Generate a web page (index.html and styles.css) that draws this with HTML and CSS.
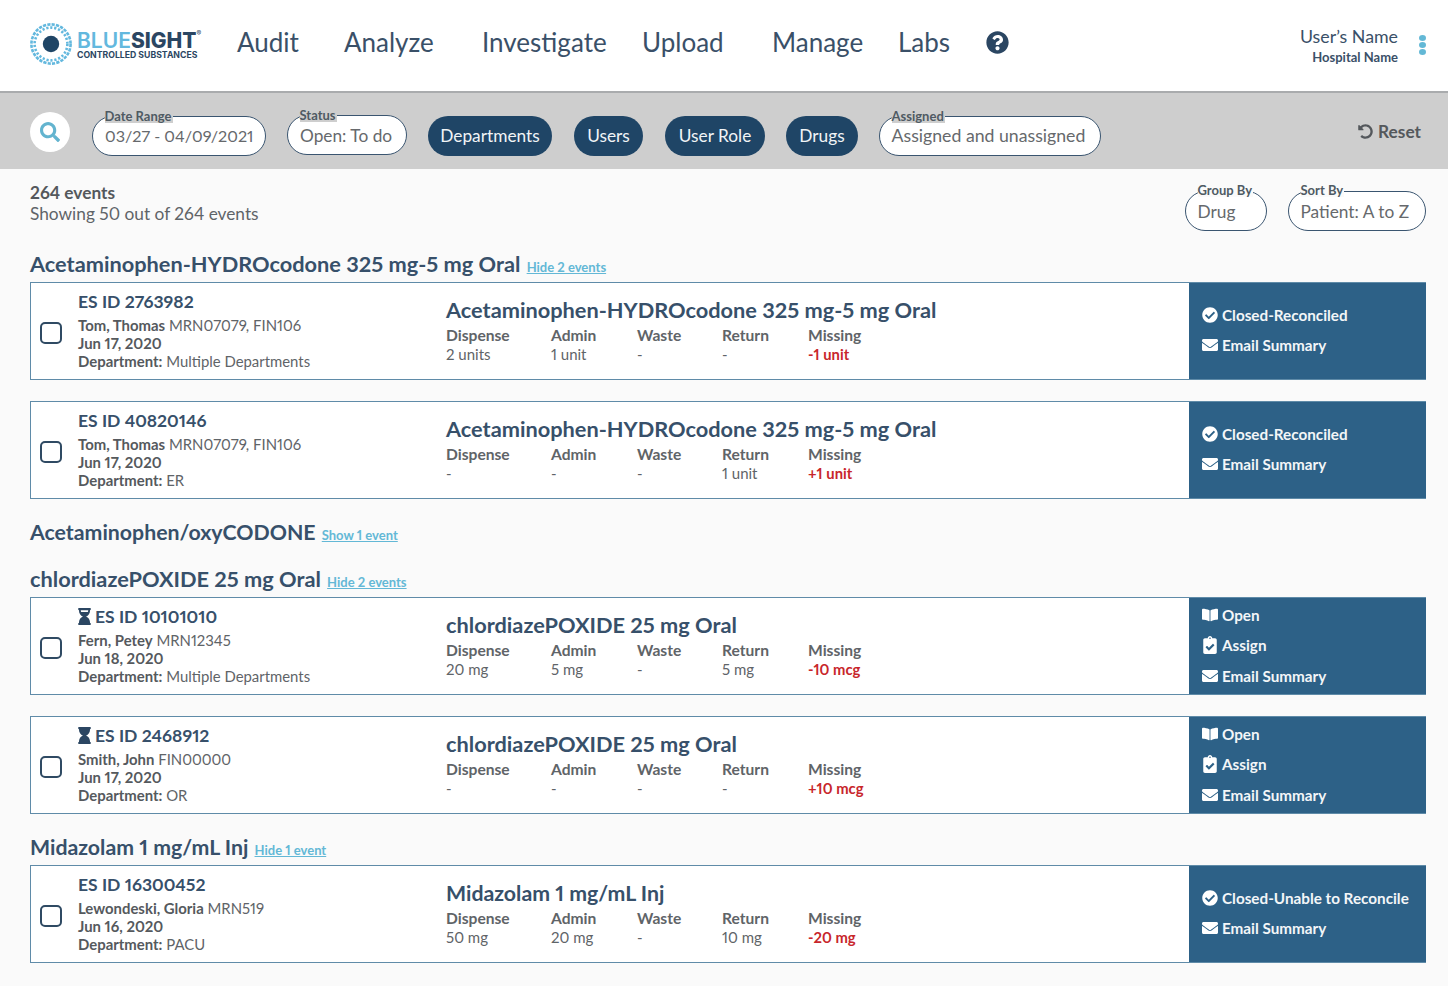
FILE: index.html
```html
<!DOCTYPE html>
<html lang="en">
<head>
<meta charset="utf-8">
<title>Bluesight Controlled Substances</title>
<link rel="stylesheet" href="styles.css">
</head>
<body>
<svg class="defs" width="0" height="0" aria-hidden="true">
  <symbol id="i-check" viewBox="0 0 512 512"><path d="M504 256c0 136.967-111.033 248-248 248S8 392.967 8 256 119.033 8 256 8s248 111.033 248 248zM227.314 387.314l184-184c6.248-6.248 6.248-16.379 0-22.627l-22.627-22.627c-6.248-6.249-16.379-6.249-22.628 0L216 308.118l-70.059-70.059c-6.248-6.248-16.379-6.248-22.628 0l-22.627 22.627c-6.248 6.248-6.248 16.379 0 22.627l104 104c6.249 6.249 16.379 6.249 22.628.001z"/></symbol>
  <symbol id="i-mail" viewBox="0 0 512 512"><path d="M502.3 190.8c3.9-3.1 9.7-.2 9.7 4.7V400c0 26.5-21.5 48-48 48H48c-26.5 0-48-21.5-48-48V195.6c0-5 5.7-7.8 9.7-4.7 22.4 17.4 52.1 39.5 154.1 113.6 21.1 15.4 56.7 47.8 92.2 47.6 35.7.3 72-32.8 92.3-47.6 102-74.1 131.6-96.3 154-113.7zM256 320c23.2.4 56.6-29.2 73.4-41.4 132.7-96.3 142.8-104.7 173.4-128.7 5.8-4.5 9.2-11.5 9.2-18.9v-19c0-26.5-21.5-48-48-48H48C21.5 64 0 85.5 0 112v19c0 7.4 3.4 14.3 9.2 18.9 30.6 23.9 40.7 32.4 173.4 128.7 16.8 12.2 50.2 41.8 73.4 41.4z"/></symbol>
  <symbol id="i-book" viewBox="0 0 576 512"><path d="M542.22 32.05c-54.8 3.11-163.72 14.43-230.96 55.59-4.64 2.84-7.27 7.89-7.27 13.17v363.87c0 11.55 12.63 18.85 23.28 13.49 69.18-34.82 169.23-44.32 218.7-46.92 16.89-.89 30.02-14.43 30.02-30.66V62.75c.01-17.71-15.35-31.74-33.77-30.7zM264.73 87.64C197.5 46.48 88.58 35.17 33.78 32.05 15.36 31.01 0 45.04 0 62.75V400.6c0 16.24 13.13 29.78 30.02 30.66 49.49 2.6 149.59 12.11 218.77 46.95 10.62 5.35 23.21-1.94 23.21-13.46V100.63c0-5.29-2.62-10.14-7.27-12.99z"/></symbol>
  <symbol id="i-clip" viewBox="0 0 384 512"><path d="M336 64h-80c0-35.3-28.7-64-64-64s-64 28.7-64 64H48C21.5 64 0 85.5 0 112v352c0 26.5 21.5 48 48 48h288c26.5 0 48-21.5 48-48V112c0-26.5-21.5-48-48-48zM192 40c13.3 0 24 10.7 24 24s-10.7 24-24 24-24-10.7-24-24 10.7-24 24-24zm121.2 231.8l-143 141.8c-4.7 4.7-12.3 4.6-17-.1l-82.6-83.3c-4.7-4.7-4.6-12.3.1-17L99.1 285c4.7-4.7 12.3-4.6 17 .1l46 46.4 106-105.2c4.7-4.7 12.3-4.6 17 .1l28.2 28.4c4.7 4.8 4.6 12.3-.1 17z"/></symbol>
  <symbol id="i-hour" viewBox="0 0 384 512"><path d="M360 0H24C10.745 0 0 10.745 0 24v16c0 13.255 10.745 24 24 24 0 90.965 51.016 167.734 120.842 192C75.016 280.266 24 357.035 24 448c-13.255 0-24 10.745-24 24v16c0 13.255 10.745 24 24 24h336c13.255 0 24-10.745 24-24v-16c0-13.255-10.745-24-24-24 0-90.965-51.016-167.734-120.842-192C308.984 231.734 360 154.965 360 64c13.255 0 24-10.745 24-24V24c0-13.255-10.745-24-24-24z"/></symbol>
  <symbol id="i-hour-half" viewBox="0 0 384 512"><path fill-rule="evenodd" d="M360 0H24C10.745 0 0 10.745 0 24v16c0 13.255 10.745 24 24 24 0 90.965 51.016 167.734 120.842 192C75.016 280.266 24 357.035 24 448c-13.255 0-24 10.745-24 24v16c0 13.255 10.745 24 24 24h336c13.255 0 24-10.745 24-24v-16c0-13.255-10.745-24-24-24 0-90.965-51.016-167.734-120.842-192C308.984 231.734 360 154.965 360 64c13.255 0 24-10.745 24-24V24c0-13.255-10.745-24-24-24zM80 64h224c0 20-4 40-11 58H91c-7-18-11-38-11-58z"/></symbol>
  <symbol id="i-undo" viewBox="0 0 512 512"><path d="M255.545 8c-66.269.119-126.438 26.233-170.86 68.685L48.971 40.971C33.851 25.851 8 36.559 8 57.941V192c0 13.255 10.745 24 24 24h134.059c21.382 0 32.09-25.851 16.971-40.971l-41.75-41.75c30.864-28.899 70.801-44.907 113.23-45.273 92.398-.798 170.283 73.977 169.484 169.442C423.236 348.009 349.816 424 256 424c-41.127 0-79.997-14.678-110.63-41.556-4.743-4.161-11.906-3.908-16.368.553L89.34 422.659c-4.872 4.872-4.631 12.815.482 17.433C133.798 479.813 192.074 504 256 504c136.966 0 247.999-111.033 248-247.998C504.001 119.193 392.354 7.755 255.545 8z"/></symbol>
</svg>

<header class="topbar">
  <a class="logo">
    <svg class="logo-mark" viewBox="0 0 42 42">
      <circle cx="21" cy="21" r="19.6" fill="none" stroke="#63b8de" stroke-width="2.6" stroke-dasharray="3.2 1.2"/>
      <circle cx="21" cy="21" r="16.4" fill="none" stroke="#63b8de" stroke-width="2.6" stroke-dasharray="2.2 1.8"/>
      <circle cx="21" cy="21" r="8.2" fill="#1f4566"/>
    </svg>
    <span class="logo-text">
      <span class="logo-name"><span class="logo-blue">BLUE</span>SIGHT<sup class="logo-reg">®</sup></span>
      <span class="logo-sub">CONTROLLED SUBSTANCES</span>
    </span>
  </a>
  <nav class="nav">
    <a>Audit</a><a>Analyze</a><a>Investigate</a><a>Upload</a><a>Manage</a><a>Labs</a>
    <svg class="help" viewBox="0 0 512 512"><path d="M504 256c0 136.997-111.043 248-248 248S8 392.997 8 256C8 119.083 119.043 8 256 8s248 111.083 248 248zM262.655 90c-54.497 0-89.255 22.957-116.549 63.758-3.536 5.286-2.353 12.415 2.715 16.258l34.699 26.31c5.205 3.947 12.621 3.008 16.665-2.122 17.864-22.658 30.113-35.797 57.303-35.797 20.429 0 45.698 13.148 45.698 32.958 0 14.976-12.363 22.667-32.534 33.976C247.128 238.528 216 254.941 216 296v4c0 6.627 5.373 12 12 12h56c6.627 0 12-5.373 12-12v-1.333c0-28.462 83.186-29.647 83.186-106.667 0-58.002-60.165-102-116.531-102zM256 338c-25.365 0-46 20.635-46 46 0 25.364 20.635 46 46 46s46-20.636 46-46c0-25.365-20.635-46-46-46z"/></svg>
  </nav>
  <div class="user">
    <div class="user-text">
      <div class="user-name">User’s Name</div>
      <div class="user-hospital">Hospital Name</div>
    </div>
    <div class="kebab"><i></i><i></i><i></i></div>
  </div>
</header>

<section class="filters">
  <button class="search-btn"><svg viewBox="0 0 512 512"><path d="M505 442.7L405.3 343c-4.5-4.5-10.6-7-17-7H372c27.6-35.3 44-79.7 44-128C416 93.1 322.9 0 208 0S0 93.1 0 208s93.1 208 208 208c48.3 0 92.7-16.4 128-44v16.3c0 6.4 2.5 12.5 7 17l99.7 99.7c9.4 9.4 24.6 9.4 33.9 0l28.3-28.3c9.4-9.4 9.4-24.6.1-34zM208 336c-70.7 0-128-57.2-128-128 0-70.7 57.2-128 128-128 70.7 0 128 57.2 128 128 0 70.7-57.2 128-128 128z"/></svg></button>
  <div class="pill pill-outline pill-date"><span class="pill-label on-gray">Date Range</span>03/27 - 04/09/2021</div>
  <div class="pill pill-outline pill-status"><span class="pill-label on-gray">Status</span>Open: To do</div>
  <div class="pill pill-dark pill-dep">Departments</div>
  <div class="pill pill-dark pill-users">Users</div>
  <div class="pill pill-dark pill-role">User Role</div>
  <div class="pill pill-dark pill-drugs">Drugs</div>
  <div class="pill pill-outline pill-assigned"><span class="pill-label on-gray">Assigned</span>Assigned and unassigned</div>
  <a class="reset"><svg class="icon"><use href="#i-undo"/></svg>Reset</a>
</section>

<main class="content">
  <div class="summary">
    <div class="summary-text">
      <div class="summary-count">264 events</div>
      <div>Showing 50 out of 264 events</div>
    </div>
    <div class="summary-controls">
      <div class="pill pill-outline pill-group"><span class="pill-label on-light">Group By</span>Drug</div>
      <div class="pill pill-outline pill-sort"><span class="pill-label on-light">Sort By</span>Patient: A to Z</div>
    </div>
  </div>

  <h2 class="group-title">Acetaminophen-HYDROcodone 325 mg-5 mg Oral <a class="toggle">Hide 2 events</a></h2>
  <article class="card">
    <label class="check"><span class="box"></span></label>
    <div class="who">
      <div class="es">ES ID 2763982</div>
      <div><b>Tom, Thomas</b> MRN07079, FIN106</div>
      <div><b>Jun 17, 2020</b></div>
      <div><b>Department:</b> Multiple Departments</div>
    </div>
    <div class="detail">
      <div class="drug">Acetaminophen-HYDROcodone 325 mg-5 mg Oral</div>
      <div class="stats">
        <div><b>Dispense</b><span>2 units</span></div>
        <div><b>Admin</b><span>1 unit</span></div>
        <div><b>Waste</b><span>-</span></div>
        <div><b>Return</b><span>-</span></div>
        <div><b>Missing</b><span class="red">-1 unit</span></div>
      </div>
    </div>
    <div class="actions">
      <a><svg class="icon"><use href="#i-check"/></svg>Closed-Reconciled</a>
      <a><svg class="icon"><use href="#i-mail"/></svg>Email Summary</a>
    </div>
  </article>
  <article class="card card-next">
    <label class="check"><span class="box"></span></label>
    <div class="who">
      <div class="es">ES ID 40820146</div>
      <div><b>Tom, Thomas</b> MRN07079, FIN106</div>
      <div><b>Jun 17, 2020</b></div>
      <div><b>Department:</b> ER</div>
    </div>
    <div class="detail">
      <div class="drug">Acetaminophen-HYDROcodone 325 mg-5 mg Oral</div>
      <div class="stats">
        <div><b>Dispense</b><span>-</span></div>
        <div><b>Admin</b><span>-</span></div>
        <div><b>Waste</b><span>-</span></div>
        <div><b>Return</b><span>1 unit</span></div>
        <div><b>Missing</b><span class="red">+1 unit</span></div>
      </div>
    </div>
    <div class="actions">
      <a><svg class="icon"><use href="#i-check"/></svg>Closed-Reconciled</a>
      <a><svg class="icon"><use href="#i-mail"/></svg>Email Summary</a>
    </div>
  </article>

  <h2 class="group-title title-narrow">Acetaminophen/oxyCODONE <a class="toggle">Show 1 event</a></h2>

  <h2 class="group-title">chlordiazePOXIDE 25 mg Oral <a class="toggle">Hide 2 events</a></h2>
  <article class="card">
    <label class="check"><span class="box"></span></label>
    <div class="who">
      <div class="es"><svg class="hour"><use href="#i-hour-half"/></svg>ES ID 10101010</div>
      <div><b>Fern, Petey</b> MRN12345</div>
      <div><b>Jun 18, 2020</b></div>
      <div><b>Department:</b> Multiple Departments</div>
    </div>
    <div class="detail">
      <div class="drug">chlordiazePOXIDE 25 mg Oral</div>
      <div class="stats">
        <div><b>Dispense</b><span>20 mg</span></div>
        <div><b>Admin</b><span>5 mg</span></div>
        <div><b>Waste</b><span>-</span></div>
        <div><b>Return</b><span>5 mg</span></div>
        <div><b>Missing</b><span class="red">-10 mcg</span></div>
      </div>
    </div>
    <div class="actions">
      <a><svg class="icon"><use href="#i-book"/></svg>Open</a>
      <a><svg class="icon icon-tall"><use href="#i-clip"/></svg>Assign</a>
      <a><svg class="icon"><use href="#i-mail"/></svg>Email Summary</a>
    </div>
  </article>
  <article class="card card-next">
    <label class="check"><span class="box"></span></label>
    <div class="who">
      <div class="es"><svg class="hour"><use href="#i-hour"/></svg>ES ID 2468912</div>
      <div><b>Smith, John</b> FIN00000</div>
      <div><b>Jun 17, 2020</b></div>
      <div><b>Department:</b> OR</div>
    </div>
    <div class="detail">
      <div class="drug">chlordiazePOXIDE 25 mg Oral</div>
      <div class="stats">
        <div><b>Dispense</b><span>-</span></div>
        <div><b>Admin</b><span>-</span></div>
        <div><b>Waste</b><span>-</span></div>
        <div><b>Return</b><span>-</span></div>
        <div><b>Missing</b><span class="red">+10 mcg</span></div>
      </div>
    </div>
    <div class="actions">
      <a><svg class="icon"><use href="#i-book"/></svg>Open</a>
      <a><svg class="icon icon-tall"><use href="#i-clip"/></svg>Assign</a>
      <a><svg class="icon"><use href="#i-mail"/></svg>Email Summary</a>
    </div>
  </article>

  <h2 class="group-title title-narrow">Midazolam 1 mg/mL Inj <a class="toggle">Hide 1 event</a></h2>
  <article class="card">
    <label class="check"><span class="box"></span></label>
    <div class="who">
      <div class="es">ES ID 16300452</div>
      <div><b>Lewondeski, Gloria</b> MRN519</div>
      <div><b>Jun 16, 2020</b></div>
      <div><b>Department:</b> PACU</div>
    </div>
    <div class="detail">
      <div class="drug title-narrow">Midazolam 1 mg/mL Inj</div>
      <div class="stats">
        <div><b>Dispense</b><span>50 mg</span></div>
        <div><b>Admin</b><span>20 mg</span></div>
        <div><b>Waste</b><span>-</span></div>
        <div><b>Return</b><span>10 mg</span></div>
        <div><b>Missing</b><span class="red">-20 mg</span></div>
      </div>
    </div>
    <div class="actions">
      <a><svg class="icon"><use href="#i-check"/></svg>Closed-Unable to Reconcile</a>
      <a><svg class="icon"><use href="#i-mail"/></svg>Email Summary</a>
    </div>
  </article>
</main>
</body>
</html>
```

FILE: styles.css
```css
* { box-sizing: border-box; }
html, body { margin: 0; height: 100%; overflow: hidden; }
body {
  font-family: "Lato", "Liberation Sans", sans-serif;
  font-variant-numeric: proportional-nums;
  background: #fafafa;
  color: #555b60;
  font-size: 15px;
}
.defs { position: absolute; }
b { font-weight: 700; }

.topbar {
  height: 93px;
  background: #fff;
  border-bottom: 2px solid #a9abad;
  display: flex;
  align-items: center;
  padding: 0 22px 6px 30px;
}
.logo { display: flex; align-items: center; width: 207px; flex: none; padding-top: 3px; }
.logo-mark { width: 42px; height: 42px; flex: none; margin-right: 5px; }
.logo-text { display: flex; flex-direction: column; color: #2b4662; font-family: "Inter", "Liberation Sans", sans-serif; font-weight: 800; margin-top: 3px; }
.logo-name { font-size: 21px; line-height: 20px; position: relative; }
.logo-blue { color: #63b8de; font-weight: 600; }
.logo-reg { font-size: 7px; line-height: 7px; position: absolute; top: -1px; font-weight: 400; }
.logo-sub { font-size: 8.7px; line-height: 9px; font-weight: 700; white-space: nowrap; }

.nav {
  display: grid;
  grid-template-columns: 107px 138px 160px 130px 126px 88px 23px;
  align-items: center;
  font-size: 26px;
  color: #3a5068;
  margin-top: -2px;
}
.help { width: 23px; height: 23px; fill: #2b4662; margin-top: 2px; }
.user { margin-left: auto; display: flex; align-items: center; gap: 21px; }
.user-text { text-align: right; color: #3a5068; padding-top: 4px; }
.user-name { font-size: 17.8px; line-height: 24px; }
.user-hospital { font-size: 13px; font-weight: 700; line-height: 18px; }
.kebab { display: flex; flex-direction: column; gap: 1px; width: 7px; margin-top: 4px; }
.kebab i { width: 7px; height: 6px; border-radius: 50%; background: #63b8d6; }

.filters {
  height: 76px;
  background: #cecece;
  display: flex;
  align-items: center;
  gap: 21px;
  padding: 0 27px 0 30px;
}
.search-btn {
  width: 40px; height: 40px; flex: none; margin: 2px 1px 0 0;
  border: 0; border-radius: 50%; background: #fff; padding: 0;
  display: flex; align-items: center; justify-content: center;
}
.search-btn svg { width: 20px; height: 20px; fill: #63b4cf; }

.pill {
  position: relative;
  height: 40px;
  border-radius: 20px;
  display: flex;
  align-items: center;
  padding: 0 11.5px;
  font-size: 17.3px;
  white-space: nowrap;
}
.filters .pill { margin-top: 9px; }
.filters .pill-status { margin-top: 8px; }
.pill-date { width: 174px; font-size: 16.2px; padding-left: 12px; }
.pill-status { width: 120px; padding-left: 12px; }
.pill-dep { width: 124px; }
.pill-users { width: 69px; margin-left: 1px; }
.pill-role { width: 100px; margin-left: 1px; }
.pill-drugs { width: 72px; }
.pill-assigned { width: 222px; font-size: 17.7px; }
.pill-group { width: 82px; }
.pill-sort { width: 138px; }
.pill-dark { background: #1f4566; color: #f1f4f6; justify-content: center; padding: 0; }
.pill-outline { background: #fff; border: 1.5px solid #3a5570; color: #66696c; }
.pill-label {
  position: absolute;
  left: 11.5px;
  top: -8px;
  font-size: 13px;
  line-height: 14px;
  font-weight: 700;
  color: #4f5a63;
  padding-right: 1px;
}
.on-gray { background: #cecece; }
.on-light { background: #fafafa; top: -9px; }
.reset {
  margin-left: auto;
  display: flex; align-items: center; gap: 5px;
  font-size: 17.3px; font-weight: 700; color: #54585c;
  padding-top: 1px;
}
.reset .icon { width: 15px; height: 15px; fill: #54585c; }

.content { padding: 0 22px 0 30px; }
.summary { display: flex; justify-content: space-between; padding-top: 13px; }
.summary-text { font-size: 17.3px; line-height: 21px; color: #5f6468; }
.summary-count { font-weight: 700; color: #54585c; }
.summary-controls { display: flex; gap: 21px; padding-top: 9px; }

.group-title {
  margin: 21px 0 0;
  font-size: 21.75px;
  line-height: 24px;
  font-weight: 700;
  color: #37506a;
  height: 26px;
}
.toggle {
  font-size: 13px;
  font-weight: 700;
  color: #63b8d6;
  text-decoration: underline;
  margin-left: 1px;
}

.card {
  height: 98px;
  margin-top: 4px;
  display: flex;
  background: #fff;
  border: 1.5px solid #5f8ba8;
  border-right: 0;
  color: #5f6468;
}
.card-next { margin-top: 21px; }
.check { width: 47px; flex: none; display: flex; align-items: center; padding: 3px 0 0 8.5px; }
.box {
  width: 22px; height: 22px;
  border: 2.5px solid #2f4a63;
  border-radius: 5px;
  background: #fff;
}
.who { width: 368px; flex: none; font-size: 14.9px; line-height: 18px; padding-top: 7.5px; }
.who b { color: #55595d; }
.es {
  font-size: 17.5px; font-weight: 700; color: #37506a;
  line-height: 22px; margin-bottom: 3px;
  display: flex; align-items: center;
}
.hour { width: 13px; height: 17px; fill: #2b4662; margin-right: 4px; }
.detail { flex: 1; padding-top: 14px; }
.drug { font-size: 21.75px; font-weight: 700; color: #37506a; line-height: 26px; }
.title-narrow { font-size: 21.3px; }
.stats {
  display: grid;
  grid-template-columns: 105px 86px 85px 86px auto;
  justify-content: start;
  margin-top: 3px;
  line-height: 18px;
}
.stats div { display: flex; flex-direction: column; }
.stats b { font-size: 15.6px; line-height: 19px; }
.red { color: #c8262b; font-weight: 700; font-size: 14.8px; }
.actions {
  width: 237px; flex: none;
  background: #2d6187;
  color: #f3f6f8;
  font-weight: 700;
  font-size: 15.25px;
  display: flex;
  flex-direction: column;
  justify-content: center;
  gap: 12.5px;
  padding: 0 0 2px 13px;
}
.actions a { display: flex; align-items: center; gap: 4px; line-height: 18px; height: 18px; }
.actions .icon { width: 16px; height: 16px; fill: #fff; flex: none; }
.actions .icon-tall { height: 18px; }
```
